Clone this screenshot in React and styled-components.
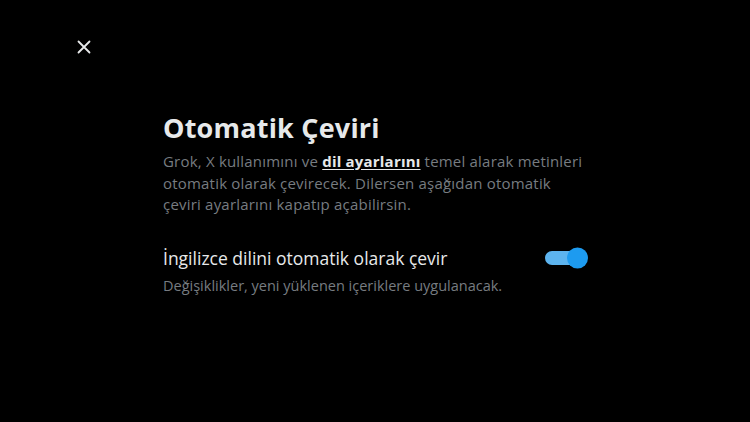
import React, { useState } from 'react'
import styled, { createGlobalStyle } from 'styled-components'

const Global = createGlobalStyle`
  html, body {
    margin: 0;
    padding: 0;
    background: #000;
  }
  body {
    font-family: "Open Sans", "Noto Sans", "Liberation Sans", sans-serif;
    -webkit-font-smoothing: antialiased;
  }
`

const Page = styled.div`
  width: 750px;
  height: 422px;
  background: #000;
  position: relative;
  overflow: hidden;
`

const TopBar = styled.div`
  display: flex;
  align-items: center;
  padding: 38px 0 0 76px;
  height: 18px;
`

const CloseButton = styled.button`
  width: 16px;
  height: 16px;
  padding: 0;
  border: none;
  background: none;
  display: flex;
  align-items: center;
  justify-content: center;
  cursor: pointer;
  color: #e7e9ea;
`

const Content = styled.div`
  width: 428px;
  margin: 54px 0 0 163px;
`

const Title = styled.h1`
  margin: 0;
  font-size: 27px;
  font-weight: 700;
  line-height: 35px;
  color: #e7e9ea;
  letter-spacing: 0.2px;
`

const Description = styled.p`
  margin: 6px 0 0;
  font-size: 15px;
  font-weight: 500;
  line-height: 21.5px;
  letter-spacing: 0.2px;
  color: #777c81;
  a {
    color: #e7e9ea;
    font-weight: 700;
    text-decoration: underline;
    text-underline-offset: 2px;
  }
`

const SettingRow = styled.div`
  display: flex;
  align-items: center;
  justify-content: space-between;
  margin-top: 31px;
`

const SettingLabel = styled.span`
  font-size: 17.5px;
  font-weight: 500;
  line-height: 22px;
  color: #e7e9ea;
`

const Hint = styled.div`
  margin-top: 8px;
  font-size: 14.5px;
  font-weight: 500;
  line-height: 18px;
  color: #777c81;
`

const Track = styled.button`
  position: relative;
  width: 40px;
  height: 14px;
  border: none;
  padding: 0;
  border-radius: 7px;
  background: ${p => (p.$on ? '#5db4ef' : '#3e4144')};
  cursor: pointer;
  margin-right: 6px;
`

const Knob = styled.span`
  position: absolute;
  top: 50%;
  left: ${p => (p.$on ? '22px' : '-2px')};
  width: 21px;
  height: 21px;
  border-radius: 50%;
  transform: translateY(-50%);
  background: ${p => (p.$on ? '#1d9bf0' : '#e7e9ea')};
  transition: left 0.15s;
`

export default function App() {
  const [on, setOn] = useState(true)
  return (
    <Page>
      <Global />
      <TopBar>
        <CloseButton aria-label="Kapat">
          <svg width="14" height="14" viewBox="0 0 14 14">
            <path d="M1.5 1.5 L12.5 12.5 M12.5 1.5 L1.5 12.5" stroke="currentColor" strokeWidth="1.8" strokeLinecap="round" />
          </svg>
        </CloseButton>
      </TopBar>
      <Content>
        <Title>Otomatik Çeviri</Title>
        <Description>
          Grok, X kullanımını ve <a href="#">dil ayarlarını</a> temel alarak metinleri otomatik olarak çevirecek.
          Dilersen aşağıdan otomatik çeviri ayarlarını kapatıp açabilirsin.
        </Description>
        <SettingRow>
          <SettingLabel>İngilizce dilini otomatik olarak çevir</SettingLabel>
          <Track $on={on} onClick={() => setOn(!on)} aria-label="Çeviri">
            <Knob $on={on} />
          </Track>
        </SettingRow>
        <Hint>Değişiklikler, yeni yüklenen içeriklere uygulanacak.</Hint>
      </Content>
    </Page>
  )
}
